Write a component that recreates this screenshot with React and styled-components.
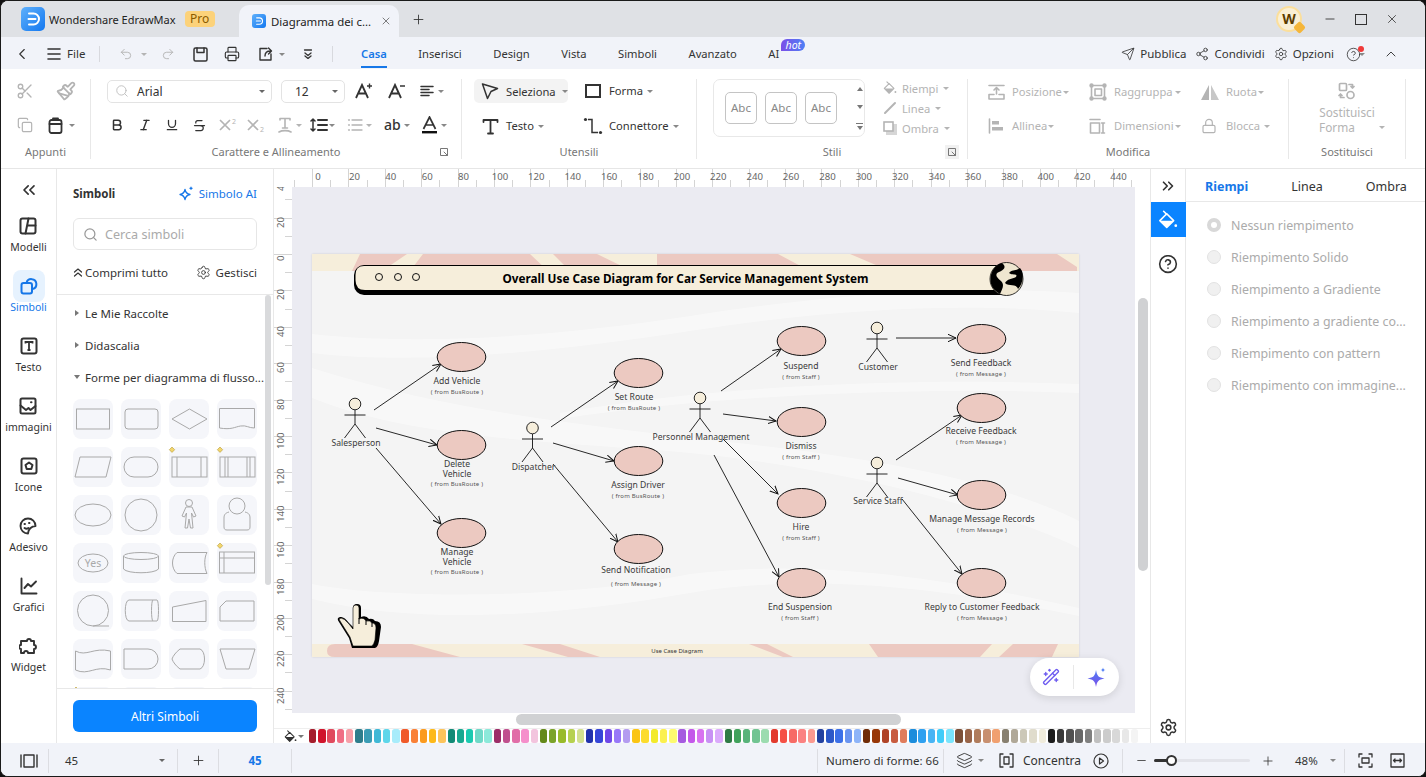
import React from "react";
import styled, { createGlobalStyle } from "styled-components";
import {
  ChevronLeft, Undo2, Redo2, Printer, ChevronUp, Search, Scissors, Paintbrush, Copy,
  Send, Share2, Settings, CircleHelp, Bold, Italic, Underline, Strikethrough, X, Plus, Minus,
  ChevronsLeft, ChevronsRight, Lock, Layers, Wand2,
} from "lucide-react";

const GlobalStyle = createGlobalStyle`
  html, body { margin: 0; padding: 0; background: #111; }
  * { box-sizing: border-box; }
  body { font-family: "Noto Sans", "Liberation Sans", sans-serif; font-size: 11.5px; color: #333; }
`;

const BLUE = "#1677e8";
const OFF = "#b4b4b4";

const Window = styled.div`
  width: 1426px;
  height: 777px;
  border: 1px solid #1a1a1a;
  border-radius: 8px;
  overflow: hidden;
  display: flex;
  flex-direction: column;
  background: #fff;
`;

/* title bar */
const TitleBar = styled.div`
  height: 36px;
  flex: none;
  background: #dfe1e5;
  display: flex;
  align-items: flex-end;
  padding-left: 20px;
`;
const AppName = styled.div`
  height: 36px;
  display: flex;
  align-items: center;
  width: 218px;
  font-size: 11px;
  color: #222;
  gap: 4px;
`;
const ProBadge = styled.span`
  margin-left: 5px;
  width: 30px;
  height: 16px;
  border-radius: 4px;
  background: #fcd27a;
  color: #8a5a00;
  font-size: 12px;
  line-height: 16px;
  text-align: center;
`;
const DocTab = styled.div`
  width: 160px;
  height: 32px;
  background: #f1f3f9;
  border-radius: 10px 10px 0 0;
  display: flex;
  align-items: center;
  padding: 0 7px 0 13px;
  gap: 5px;
  color: #222;
  font-size: 11.4px;
  white-space: nowrap;
`;
const DocTitle = styled.span`
  flex: 1;
`;
const NewTab = styled.div`
  height: 36px;
  display: flex;
  align-items: center;
  margin-left: 12px;
  color: #333;
`;
const WindowButtons = styled.div`
  margin-left: auto;
  height: 36px;
  display: flex;
  align-items: center;
  padding-right: 26px;
  gap: 18px;
  color: #333;
`;
const Avatar = styled.div`
  width: 26px;
  height: 26px;
  margin-right: 3px;
  border-radius: 50%;
  background: #f9efd5;
  border: 2px solid #fbdf9c;
  color: #5c3d00;
  font-weight: 700;
  font-size: 14px;
  line-height: 22px;
  text-align: center;
  position: relative;
`;
const AvatarMark = styled.span`
  position: absolute;
  right: -4px;
  bottom: -2px;
  width: 9px;
  height: 9px;
  background: #f5b63a;
  transform: rotate(45deg);
  border-radius: 2px;
`;
const MaxBox = styled.span`
  width: 12px;
  height: 11px;
  border: 1.3px solid #333;
`;

/* menu bar */
const MenuBar = styled.div`
  height: 32px;
  flex: none;
  background: #f1f3f9;
  display: flex;
  align-items: center;
  padding: 2px 26px 0 0;
  color: #333;
`;
const Tool = styled.div`
  flex: none;
  display: flex;
  align-items: center;
  width: ${(p) => (p.$w ? `${p.$w}px` : "auto")};
  padding-left: ${(p) => p.$pl || 0}px;
  gap: ${(p) => p.$gap || 0}px;
  color: ${(p) => (p.$off ? OFF : "#333")};
  line-height: 16px;
`;
const Sep = styled.div`
  width: 1px;
  height: 16px;
  background: #d8d9de;
  flex: none;
`;
const MenuTabs = styled.div`
  height: 32px;
  margin: -2px 0 0 28px;
  display: flex;
  gap: 31.5px;
  font-size: 11.2px;
`;
const MenuTab = styled.div`
  height: 31px;
  padding-top: 3px;
  display: flex;
  align-items: center;
  position: relative;
  color: ${(p) => (p.$on ? BLUE : "#333")};
  font-weight: ${(p) => (p.$on ? 600 : 400)};
  border-bottom: 2px solid ${(p) => (p.$on ? BLUE : "transparent")};
`;
const HotBadge = styled.span`
  position: absolute;
  left: 13px;
  top: 2px;
  width: 24px;
  height: 12px;
  border-radius: 6px 6px 6px 0;
  background: linear-gradient(90deg, #7b4fe8, #4f7ff5);
  color: #fff;
  font-size: 10.5px;
  line-height: 12px;
  font-style: italic;
  text-align: center;
`;
const MenuRight = styled.div`
  margin-left: auto;
  display: flex;
  align-items: center;
  gap: 9px;
`;
const RedDot = styled.span`
  width: 6px;
  height: 6px;
  border-radius: 50%;
  background: #f03a3a;
  margin: -10px 0 0 -3px;
`;

const Caret = styled.span`
  flex: none;
  width: 0;
  height: 0;
  margin-left: ${(p) => p.$ml ?? 3}px;
  border-left: 3px solid transparent;
  border-right: 3px solid transparent;
  border-top: 3px solid ${(p) => p.$c || "#888"};
`;

/* ribbon */
const Ribbon = styled.div`
  height: 100px;
  flex: none;
  background: #fff;
  border-bottom: 1px solid #e6e6e6;
  display: flex;
  padding-top: 10px;
  font-size: 11.2px;
`;
const Group = styled.div`
  flex: none;
  width: ${(p) => p.$w}px;
  height: 80px;
  border-right: 1px solid #e8e8e8;
  display: flex;
  flex-direction: column;
`;
const GroupBody = styled.div`
  height: 58px;
  flex: none;
  display: flex;
  flex-direction: ${(p) => (p.$row ? "row" : "column")};
  gap: 10px;
`;
const RibbonRow = styled.div`
  height: 24px;
  flex: none;
  display: flex;
  align-items: center;
  padding-left: ${(p) => p.$pl || 0}px;
  margin-top: ${(p) => p.$dy || 0}px;
`;
const GroupFoot = styled.div`
  margin-top: 7px;
  height: 14px;
  display: grid;
  grid-template-columns: 1fr auto 1fr;
  align-items: center;
  font-size: 11px;
  color: #777;
  padding: 0 ${(p) => p.$pr || 0}px;
`;
const FootEnd = styled.span`
  justify-self: end;
  color: #777;
  display: flex;
  padding: 2px;
  background: ${(p) => (p.$tint ? "#f1f1f1" : "transparent")};
`;
const FieldBox = styled.div`
  flex: none;
  width: ${(p) => p.$w}px;
  height: 23px;
  border: 1px solid #e3e3e3;
  border-radius: 5px;
  display: flex;
  align-items: center;
  padding: 0 6px 0 ${(p) => p.$pl}px;
  gap: 8px;
  color: #333;
  font-size: 12px;
  margin-right: ${(p) => p.$mr || 0}px;
`;
const FieldText = styled.span`
  flex: 1;
`;
const SelectTool = styled.div`
  flex: none;
  width: 94px;
  height: 24px;
  border-radius: 5px;
  background: #f3f3f3;
  display: flex;
  align-items: center;
  padding-left: 7px;
  margin-right: 17px;
  color: #333;
`;
const IconSlot = styled.span`
  flex: none;
  width: ${(p) => p.$w || 24}px;
  margin-left: ${(p) => p.$ml || 0}px;
  display: flex;
  align-items: center;
`;
const FormSquare = styled.span`
  display: block;
  width: 16px;
  height: 14px;
  border: 2px solid #333;
`;
const StyleBox = styled.div`
  flex: none;
  width: 152px;
  height: 58px;
  margin-left: 16px;
  border: 1px solid #e8e8e8;
  border-radius: 7px;
  display: flex;
  align-items: center;
  padding-left: 11px;
  gap: 8px;
`;
const AbcCard = styled.div`
  width: 32px;
  height: 32px;
  border: 1px solid #c4c4c4;
  border-radius: 5px;
  color: #888;
  font-size: 11.5px;
  line-height: 30px;
  text-align: center;
`;
const StyleArrows = styled.div`
  height: 56px;
  margin-left: 11px;
  display: flex;
  flex-direction: column;
  justify-content: space-around;
  align-items: center;
  color: #777;
`;
const Triangle = styled.span`
  width: 0;
  height: 0;
  border-left: 3.5px solid transparent;
  border-right: 3.5px solid transparent;
  ${(p) => (p.$up ? "border-bottom: 4px solid #777;" : "border-top: 4px solid #777;")}
`;
const MoreLines = styled.span`
  width: 7px;
  height: 6px;
  border-top: 1px solid #777;
  display: flex;
  justify-content: center;
  padding-top: 2px;
`;
const StyleOptions = styled.div`
  margin: -1px 0 0 8px;
  height: 60px;
  display: flex;
  flex-direction: column;
  justify-content: space-between;
  color: ${OFF};
`;
const StyleOption = styled.div`
  height: 20px;
  display: flex;
  align-items: center;
`;
const SwapBody = styled.div`
  height: 58px;
  flex: none;
  display: flex;
  flex-direction: column;
  align-items: center;
  color: ${OFF};
  font-size: 11.8px;
  line-height: 15px;
  padding-top: 3px;
`;
const SwapLine = styled.div`
  width: 100%;
  display: grid;
  grid-template-columns: 1fr auto 1fr;
  align-items: center;
  padding-right: 20px;
`;
const SwapCaret = styled(Caret)`
  justify-self: end;
`;
const SwapIcon = styled.div`
  height: 20px;
  margin-bottom: 3px;
`;

/* main */
const Main = styled.div`
  flex: 1;
  min-height: 0;
  display: flex;
`;
const Nav = styled.div`
  flex: none;
  width: 56px;
  border-right: 1px solid #e8e8e8;
  display: flex;
  flex-direction: column;
  align-items: center;
  gap: 14px;
`;
const NavCollapse = styled.div`
  height: 41px;
  margin-bottom: -14px;
  display: flex;
  align-items: center;
  color: #333;
`;
const NavItem = styled.div`
  height: 46px;
  display: flex;
  flex-direction: column;
  align-items: center;
  color: ${(p) => (p.$on ? BLUE : "#333")};
  font-size: 10.5px;
  line-height: 14px;
`;
const NavIcon = styled.div`
  width: 32px;
  height: 32px;
  flex: none;
  border-radius: 8px;
  background: ${(p) => (p.$on ? "#e6f2fe" : "transparent")};
  display: flex;
  align-items: center;
  justify-content: center;
  margin-bottom: -2px;
`;

const SymbolPanel = styled.div`
  flex: none;
  width: 217px;
  border-right: 1px solid #e8e8e8;
  display: flex;
  flex-direction: column;
`;
const PanelHead = styled.div`
  height: 49px;
  flex: none;
  padding: 0 16px;
  display: flex;
  align-items: center;
  justify-content: space-between;
`;
const PanelTitle = styled.span`
  font-weight: 700;
  color: #333;
`;
const AiLink = styled.span`
  color: ${BLUE};
  display: flex;
  align-items: center;
  gap: 5px;
`;
const SearchBox = styled.div`
  flex: none;
  width: 184px;
  height: 32px;
  margin-left: 16px;
  border: 1px solid #e6e6e6;
  border-radius: 6px;
  display: flex;
  align-items: center;
  padding-left: 9px;
  gap: 7px;
  color: #aaa;
  font-size: 12.6px;
`;
const ActionRow = styled.div`
  height: 45px;
  flex: none;
  padding: 0 16px;
  border-bottom: 1px solid #e8e8e8;
  display: flex;
  align-items: center;
  justify-content: space-between;
  color: #333;
`;
const Action = styled.span`
  display: flex;
  align-items: center;
  gap: ${(p) => p.$gap || 5}px;
`;
const SymbolBody = styled.div`
  flex: 1;
  min-height: 0;
  display: flex;
`;
const SymbolList = styled.div`
  width: 208px;
  flex: none;
  overflow: hidden;
  padding: 2px 0 0 16px;
`;
const TreeRow = styled.div`
  height: 32px;
  width: 190px;
  display: flex;
  align-items: center;
  gap: 5px;
  color: #333;
  white-space: nowrap;
`;
const TreeMark = styled.span`
  flex: none;
  width: 6px;
  margin-left: 1px;
  display: flex;
  justify-content: center;
`;
const ArrowRight = styled.span`
  border-top: 3.5px solid transparent;
  border-bottom: 3.5px solid transparent;
  border-left: 4px solid #777;
`;
const ArrowDown = styled.span`
  border-left: 3.5px solid transparent;
  border-right: 3.5px solid transparent;
  border-top: 4px solid #777;
`;
const ShapeGrid = styled.div`
  margin-top: 6px;
  display: grid;
  grid-template-columns: repeat(4, 40px);
  grid-auto-rows: 40px;
  gap: 8px;
`;
const ShapeCell = styled.div`
  width: 40px;
  height: 40px;
  border-radius: 8px;
  background: #f5f6fa;
  color: #a9a9a9;
`;
const ScrollTrack = styled.div`
  flex: 1;
`;
const SymbolThumb = styled.div`
  width: 6px;
  height: 290px;
  border-radius: 3px;
  background: #d9dadc;
`;
const PanelFoot = styled.div`
  height: 55px;
  flex: none;
  border-top: 1px solid #e8e8e8;
  padding: 11px 16px 0;
`;
const PrimaryButton = styled.div`
  height: 32px;
  border-radius: 6px;
  background: #0a84ff;
  color: #fff;
  font-size: 12px;
  line-height: 33px;
  text-align: center;
`;

/* canvas */
const CanvasColumn = styled.div`
  flex: none;
  width: 876px;
  display: flex;
  flex-direction: column;
`;
const TopRuler = styled.div`
  height: 18px;
  flex: none;
  display: flex;
  overflow: hidden;
  background: #fff;
`;
const RulerCorner = styled.div`
  flex: none;
  width: 18px;
  height: 18px;
  background: #fff;
  position: relative;
  z-index: 1;
  margin-right: -16.4px;
`;
const TopCell = styled.div`
  flex: none;
  width: 36.4px;
  border-left: 1px solid #d4d4d4;
  font-size: 9.6px;
  line-height: 15px;
  color: #666;
  background: linear-gradient(#d4d4d4, #d4d4d4) no-repeat 17.2px 100% / 1px 7px;
`;
const TopLabel = styled.span`
  width: 10px;
  display: flex;
  justify-content: center;
  white-space: nowrap;
`;
const CanvasMiddle = styled.div`
  flex: 1;
  min-height: 0;
  display: flex;
`;
const LeftRuler = styled.div`
  flex: none;
  width: 18px;
  overflow: hidden;
  background: #fff;
`;
const LeftTrack = styled.div`
  margin-top: -5.8px;
`;
const LeftCell = styled.div`
  height: 36.4px;
  border-top: 1px solid #d4d4d4;
  font-size: 9.6px;
  color: #666;
  background: linear-gradient(#d4d4d4, #d4d4d4) no-repeat 100% 17.2px / 7px 1px;
`;
const LeftLabel = styled.span`
  display: flex;
  writing-mode: vertical-rl;
  transform: rotate(180deg);
  justify-content: center;
  white-space: nowrap;
  width: 13px;
  line-height: 13px;
  height: 7px;
`;
const Scroller = styled.div`
  flex: 1;
  min-width: 0;
  background: #ebebf2;
  padding: 67px 0 0 20px;
  position: relative;
  overflow: hidden;
`;
const DiagramPage = styled.svg`
  display: block;
  width: 767px;
  height: 403px;
  background: #f4f4f4;
  box-shadow: 0 0 2px rgba(0, 0, 0, 0.12);
`;
const CaseName = styled.text`
  font-family: "Noto Sans", sans-serif;
  font-size: 8.6px;
  fill: #3a3a3a;
  text-anchor: middle;
`;
const CaseFrom = styled.text`
  font-family: "Noto Sans", sans-serif;
  font-size: 6px;
  letter-spacing: 0.2px;
  fill: #555;
  text-anchor: middle;
`;
const PageTitle = styled.text`
  font-family: "Noto Sans", sans-serif;
  font-size: 11.75px;
  font-weight: 700;
  fill: #000;
  text-anchor: middle;
`;
const AiPill = styled.div`
  position: absolute;
  right: 16px;
  bottom: 17px;
  width: 89px;
  height: 38px;
  border-radius: 19px;
  background: #fff;
  box-shadow: 0 2px 8px rgba(0, 0, 0, 0.12);
  display: flex;
  align-items: center;
  justify-content: space-around;
  padding: 0 6px 0 5px;
`;
const PillSep = styled.span`
  width: 1px;
  height: 24px;
  background: #e8e8e8;
`;
const VScroll = styled.div`
  flex: none;
  width: 15px;
  background: #fff;
  padding: 111px 0 0 3px;
`;
const VThumb = styled.div`
  width: 10px;
  height: 273px;
  border-radius: 5px;
  background: #d0d1d3;
`;
const HScroll = styled.div`
  flex: none;
  height: 15px;
  background: #fff;
  padding: 1px 0 0 242px;
`;
const HThumb = styled.div`
  width: 385px;
  height: 11px;
  border-radius: 6px;
  background: #d0d1d3;
`;
const ColorRow = styled.div`
  flex: none;
  height: 15px;
  background: #fff;
  border-top: 1px solid #eee;
  display: flex;
  align-items: center;
  padding-left: 10px;
  color: #333;
`;
const FillMark = styled.div`
  width: 25px;
  display: flex;
  align-items: center;
`;
const Swatches = styled.div`
  display: flex;
  gap: 1.85px;
`;
const Swatch = styled.span`
  width: 7.4px;
  height: 14px;
  border-radius: 2.5px;
  background: ${(p) => p.$c};
`;

/* right dock */
const Dock = styled.div`
  flex: none;
  width: 36px;
  border-left: 1px solid #e8e8e8;
  border-right: 1px solid #e8e8e8;
  display: flex;
  flex-direction: column;
  align-items: center;
  color: #333;
`;
const DockTop = styled.div`
  height: 33px;
  display: flex;
  align-items: center;
`;
const DockActive = styled.div`
  width: 35px;
  height: 35px;
  background: #0a84ff;
  color: #fff;
  display: flex;
  align-items: center;
  justify-content: center;
`;
const DockHelp = styled.div`
  margin-top: 17px;
  display: flex;
`;
const DockGear = styled.div`
  margin-top: auto;
  padding-bottom: 6px;
  display: flex;
`;
const FillPanel = styled.div`
  flex: 1;
  display: flex;
  flex-direction: column;
`;
const FillTabs = styled.div`
  height: 33px;
  flex: none;
  border-bottom: 1px solid #e8e8e8;
  display: flex;
  align-items: center;
  gap: 43px;
  padding: 2px 0 0 19px;
  color: #333;
  font-size: 12.5px;
`;
const FillTab = styled.span`
  color: ${(p) => (p.$on ? BLUE : "#333")};
  font-weight: ${(p) => (p.$on ? 700 : 400)};
`;
const FillList = styled.div`
  padding: 7px 0 0 21px;
`;
const FillOption = styled.div`
  height: 32px;
  display: flex;
  align-items: center;
  gap: 10px;
  color: #ababab;
  font-size: 12.4px;
  white-space: nowrap;
`;
const Radio = styled.span`
  flex: none;
  width: 14px;
  height: 14px;
  border-radius: 50%;
  background: #f0f0f0;
  border: ${(p) => (p.$on ? "4px solid #d8d8d8" : "1px solid #e2e2e2")};
  ${(p) => p.$on && "background: #fff;"}
`;

/* status bar */
const StatusBar = styled.div`
  height: 33px;
  flex: none;
  background: #f1f3f9;
  display: flex;
  align-items: center;
  padding-top: 2px;
  color: #333;
`;
const StatusCell = styled.div`
  flex: none;
  width: ${(p) => p.$w}px;
  height: 24px;
  display: flex;
  align-items: center;
  justify-content: ${(p) => p.$align || "flex-start"};
  padding-left: ${(p) => p.$pl || 0}px;
  gap: ${(p) => p.$gap || 0}px;
  border-right: ${(p) => (p.$sep ? "1px solid #dcdde2" : "0")};
  color: ${(p) => p.$color || "#333"};
  font-weight: ${(p) => p.$weight || 400};
  white-space: nowrap;
`;
const StatusGrow = styled.div`
  flex: 1;
  height: 24px;
  border-right: 1px solid #dcdde2;
`;
const PageCaret = styled(Caret)`
  margin-right: 12px;
`;
const FocusLabel = styled.span`
  font-size: 12px;
`;
const ZoomValue = styled.span`
  margin-left: 20px;
`;
const SliderTrack = styled.div`
  width: 96px;
  height: 3px;
  margin: 0 11px 0 6px;
  background: #e3e4ea;
  border-radius: 2px;
  display: flex;
  align-items: center;
`;
const SliderFill = styled.div`
  width: 14px;
  height: 3px;
  background: #333;
  border-radius: 2px;
`;
const SliderKnob = styled.div`
  flex: none;
  width: 11px;
  height: 11px;
  margin-left: -2px;
  border-radius: 50%;
  background: #fff;
  border: 2px solid #333;
`;
const AbGlyph = styled.span`
  font-weight: 500;
  font-size: 14px;
`;

/* small drawn icons */
const Ico = ({ s = 16, sw = 1.5, vb = 24, children, fill = "none" }) => (
  <svg width={s} height={s} viewBox={`0 0 ${vb} ${vb}`} fill={fill} stroke="currentColor" strokeWidth={sw} strokeLinecap="round" strokeLinejoin="round">
    {children}
  </svg>
);
const LogoMark = ({ s = 24 }) => (
  <svg width={s} height={s} viewBox="0 0 24 24">
    <defs>
      <linearGradient id={`lg${s}`} x1="0" y1="0" x2="1" y2="1">
        <stop offset="0" stopColor="#5fb0fb" />
        <stop offset="1" stopColor="#1478f0" />
      </linearGradient>
    </defs>
    <rect width="24" height="24" rx="5" fill={`url(#lg${s})`} />
    <path d="M8 6.5h4.5a5.5 5.5 0 0 1 0 11H8M7.5 12h7" fill="none" stroke="#fff" strokeWidth="2" strokeLinecap="round" />
  </svg>
);
const MenuLines = () => (
  <Ico s={14} sw={1.6} vb={14}><path d="M1 2h12M1 7h12M1 12h12" /></Ico>
);
const SaveIcon = () => (
  <Ico s={15} sw={1.5} vb={15}><rect x="1" y="1" width="13" height="13" rx="1.5" /><path d="M4 1v4.5h7V1" /></Ico>
);
const ShareBox = () => (
  <Ico s={16} sw={1.4} vb={16}><path d="M9 2.5H2v11.5h11V8M7 10c0-3 2-5 5.5-5M10.5 2l3 3-3 3" /></Ico>
);
const Customize = () => (
  <Ico s={10} sw={1.3} vb={10}><path d="M1.5 1h7M2 4l3 2.5L8 4M2 7l3 2.5L8 7" /></Ico>
);
const LauncherIcon = () => (
  <Ico s={10} sw={1} vb={10}><path d="M8.5 5V1.5h-7v7H5M5 5l3.5 3.5M5.5 8.5h3v-3" /></Ico>
);
const BrushIcon = () => <Paintbrush size={20} strokeWidth={2.2} />;
const PasteIcon = () => (
  <Ico s={17} sw={1.8} vb={17}><rect x="2.5" y="3" width="12" height="13" rx="2" /><path d="M6 3V1.5h5V3M2.5 7h12" /></Ico>
);
const APlus = ({ sign }) => (
  <svg width="20" height="18" viewBox="0 0 20 18" fill="none" stroke="#333">
    <path d="M2 16 8 3l6 13M4.5 11.5h7" strokeWidth="1.8" />
    {sign === "+" ? <path d="M13 4h5M15.5 1.5v5" strokeWidth="1.4" /> : <path d="M13 4h5" strokeWidth="1.6" />}
  </svg>
);
const AlignIcon = () => (
  <Ico s={14} sw={1.5} vb={14}><path d="M1 2.5h12M1 5.5h8M1 8.5h12M1 11.5h8" /></Ico>
);
const ScriptIcon = ({ low }) => (
  <svg width="20" height="16" viewBox="0 0 20 16" fill="none" stroke={OFF}>
    <path d="M2 3l10 10M12 3 2 13" strokeWidth="1.7" />
    <text x="14" y={low ? 15 : 7} fontSize="7" fill={OFF} stroke="none" fontFamily="Noto Sans">2</text>
  </svg>
);
const TextTone = () => (
  <Ico s={16} sw={1.6} vb={16}><path d="M3 3V1.5h10V3M8 1.5V11M5.5 11h5M2 15c3-1.8 9-1.8 12 0" /></Ico>
);
const LineSpacing = () => (
  <Ico s={18} sw={1.5} vb={18}><path d="M3 3v12M1 5l2-2 2 2M1 13l2 2 2-2" /><path d="M8 4h9M8 9h9M8 14h9" strokeWidth="2" /></Ico>
);
const ListIcon = () => (
  <Ico s={16} sw={1.3} vb={16}><path d="M5 3h10M5 8h10M5 13h10M1.5 3h1M1.5 8h1M1.5 13h1" /></Ico>
);
const ColorA = () => (
  <svg width="17" height="18" viewBox="0 0 17 18" fill="none" stroke="#333">
    <path d="M2.5 13 8.5 1l6 12M5 9h7" strokeWidth="1.7" />
    <rect x="1" y="15" width="15" height="2.4" fill="#111" stroke="none" />
  </svg>
);
const PointerIcon = () => (
  <Ico s={18} sw={1.5} vb={18}><path d="M1.5 2 16.5 6.5 10 9.5 6.5 16.5Z" /></Ico>
);
const TextTool = () => (
  <Ico s={17} sw={1.8} vb={17}><path d="M1.5 4V2h14v2M8.5 2v13.5M6 15.5h5" /></Ico>
);
const ConnectorIcon = () => (
  <svg width="20" height="20" viewBox="0 0 20 20" fill="none" stroke="#333" strokeWidth="1.5">
    <circle cx="2.5" cy="3.5" r="1.6" fill="#333" stroke="none" />
    <circle cx="17.5" cy="16.5" r="1.6" fill="#333" stroke="none" />
    <path d="M5 3.5h4V16.5h6" />
  </svg>
);
const BucketIcon = ({ s = 16 }) => (
  <svg width={s} height={s} viewBox="0 0 16 16" fill="currentColor" stroke="currentColor" strokeWidth="1.3" strokeLinejoin="round" strokeLinecap="round">
    <path d="M7 3 1.5 8.5 7 14l5.5-5.5Z" fill="none" />
    <path d="M1.5 8.5h11L7 14Z" stroke="none" />
    <path d="M4.5 1 7 3.5" fill="none" />
    <circle cx="14.2" cy="12.5" r="1.1" stroke="none" />
  </svg>
);
const LineIcon = () => (
  <Ico s={14} sw={2} vb={14}><path d="M2 12 12 2" /></Ico>
);
const ShadowIcon = () => (
  <svg width="14" height="14" viewBox="0 0 14 14" fill="none"><rect x="3" y="3" width="11" height="11" fill="#d6d6d6" /><rect x="1" y="1" width="9" height="9" fill="#fff" stroke={OFF} strokeWidth="1.6" /></svg>
);
const PositionIcon = () => (
  <Ico s={17} sw={1.6} vb={17}><path d="M1 1.5h15M8.5 10V4M6 6l2.5-2.5L11 6M1 10.5h5M11 10.5h5M1 10.5V15h15v-4.5" /></Ico>
);
const AlignLeftIcon = () => (
  <Ico s={16} sw={1.6} vb={16}><path d="M1.5 1v14" /><rect x="4" y="3" width="7" height="3.5" fill="currentColor" stroke="none" /><rect x="4" y="9" width="11" height="3.5" fill="currentColor" stroke="none" /></Ico>
);
const GroupIcon = () => (
  <Ico s={18} sw={1.6} vb={18}><rect x="2.5" y="2.5" width="13" height="13" rx="1" /><rect x="6" y="6" width="6.5" height="6.5" /><circle cx="2.5" cy="2.5" r="1.4" fill="currentColor" /><circle cx="15.5" cy="2.5" r="1.4" fill="currentColor" /><circle cx="2.5" cy="15.5" r="1.4" fill="currentColor" /><circle cx="15.5" cy="15.5" r="1.4" fill="currentColor" /></Ico>
);
const SizeIcon = () => (
  <Ico s={17} sw={1.6} vb={17}><path d="M1 1.5h10" /><rect x="1.5" y="5" width="9" height="10" /><path d="M14 5v10M12.5 5h3M12.5 15h3" /></Ico>
);
const FlipIcon = () => (
  <svg width="18" height="17" viewBox="0 0 18 17" fill="currentColor"><path d="M8 1v15H0Z" /><path d="M10 1v15h8Z" opacity=".75" /></svg>
);
const SwapIconGlyph = () => (
  <Ico s={18} sw={1.7} vb={18}><rect x="1.5" y="1.5" width="7" height="7" rx="1" /><circle cx="12.5" cy="13" r="3.5" /><path d="M11 2.5h3.5V6M16 4.5 14.5 6 13 4.5M6 15.5H2.5V12M1 13.5 2.5 12 4 13.5" /></Ico>
);
const SparkleBlue = () => (
  <svg width="16" height="16" viewBox="0 0 16 16" fill="none" stroke={BLUE} strokeWidth="1.3" strokeLinejoin="round">
    <path d="M7 3.5c.6 3 2 4.4 5 5-3 .6-4.4 2-5 5-.6-3-2-4.4-5-5 3-.6 4.4-2 5-5Z" />
    <path d="M13 .8v3M11.5 2.3h3" />
  </svg>
);
const StarBurst = () => (
  <svg width="20" height="20" viewBox="0 0 20 20">
    <defs>
      <linearGradient id="burst" x1="0" y1="0" x2="0" y2="1">
        <stop offset="0" stopColor="#4d7df5" />
        <stop offset="1" stopColor="#7b4fe8" />
      </linearGradient>
    </defs>
    <path d="M9 3C10 9 11.5 10.5 17.5 11.5 11.5 12.5 10 14 9 20 8 14 6.5 12.5.5 11.5 6.5 10.5 8 9 9 3Z" fill="url(#burst)" />
    <path d="M16 .5c.3 1.7.8 2.2 2.5 2.5-1.7.3-2.2.8-2.5 2.5-.3-1.7-.8-2.2-2.5-2.5 1.7-.3 2.2-.8 2.5-2.5Z" fill="#4d7df5" />
  </svg>
);
const CollapseUp = () => (
  <Ico s={10} sw={1.2} vb={10}><path d="M1.5 5 5 2l3.5 3M1.5 9 5 6l3.5 3" /></Ico>
);
const NavModels = () => (
  <Ico s={18} sw={2} vb={18}><rect x="1.5" y="1.5" width="15" height="15" rx="2" /><path d="M9.5 1.5 6.5 16.5M8.3 8.5h8.2" /></Ico>
);
const NavSymbols = () => (
  <Ico s={18} sw={2} vb={18}><rect x="1.5" y="6" width="10.5" height="10.5" rx="2" /><path d="M6.5 6a5 5 0 1 1 6 6" /></Ico>
);
const NavText = () => (
  <svg width="18" height="18" viewBox="0 0 18 18" fill="none" stroke="#333"><rect x="1.5" y="1.5" width="15" height="15" rx="2" strokeWidth="2" /><path d="M5.5 6.5V5h7v1.5M9 5v8M7.5 13h3" strokeWidth="1.8" /></svg>
);
const NavImage = () => (
  <Ico s={18} sw={2} vb={18}><rect x="1.5" y="1.5" width="15" height="15" rx="1.5" /><path d="M1.5 8.5 7 13l2.5-2 2 2 5-4M12 5.2h.5" /></Ico>
);
const NavIconsGlyph = () => (
  <Ico s={18} sw={2} vb={18}><rect x="1.5" y="1.5" width="15" height="15" rx="2" /><path d="M9 5.5 12.5 8l-1.2 4H6.7L5.5 8Z" /></Ico>
);
const NavSticker = () => (
  <Ico s={18} sw={1.9} vb={18}><path d="M16.5 9a7.5 7.5 0 1 0-7.5 7.5c0-4 3.5-7.5 7.5-7.5Z" /><path d="M5.5 7h.5M10 6h.5M5.5 11c1.5 1 2.5 1 4 0" /></Ico>
);
const NavChart = () => (
  <Ico s={18} sw={1.9} vb={18}><path d="M1.5 1.5v15h15M4.5 11l3.5-4 3 2.5 5-5" /></Ico>
);
const NavWidget = () => (
  <Ico s={18} sw={1.9} vb={18}><path d="M5 4h3a2 2 0 1 1 4 0h3v4a2 2 0 1 1 0 4v4H9a2 2 0 1 0-4 0H2v-4a2 2 0 1 1 0-4V4Z" /></Ico>
);
const PagesIcon = () => (
  <Ico s={18} sw={1.4} vb={18}><path d="M1 3v12M17 3v12" /><rect x="4" y="3" width="10" height="12" /></Ico>
);
const FocusIcon = () => (
  <Ico s={15} sw={1.3} vb={15}><path d="M4 1H1v13h3M11 1h3v13h-3" /><rect x="5" y="4" width="5" height="7" /></Ico>
);
const PlayRing = () => (
  <Ico s={16} sw={1.2} vb={16}><circle cx="8" cy="8" r="7" /><path d="M6.5 5 10.5 8l-4 3Z" /></Ico>
);
const FitIcon = () => (
  <Ico s={15} sw={1.3} vb={15}><path d="M4 1H1v3M11 1h3v3M4 14H1v-3M11 14h3v-3" /><rect x="4" y="5" width="7" height="5" /></Ico>
);
const WidthIcon = () => (
  <Ico s={15} sw={1.3} vb={15}><rect x="1" y="1" width="13" height="13" /><path d="M3.5 7.5h8M5 6 3.5 7.5 5 9M10 6l1.5 1.5L10 9" /></Ico>
);

/* one drawing per cell of the shape palette */
const ShapeSvg = styled.svg.attrs({ width: 40, height: 40, viewBox: "0 0 40 40", fill: "none", stroke: "currentColor", strokeWidth: 1 })`
  overflow: visible;
`;
const Dia = () => <path d="M3 0 5.7 2.7 3 5.4.3 2.7Z" fill="#f3d66d" stroke="#b39a3a" strokeWidth=".6" />;
const SHAPES = [
  <rect x="3.5" y="10" width="33" height="20" />,
  <rect x="4" y="10" width="33" height="20" rx="3" />,
  <path d="M3 20 20.5 10 38 20 20.5 30Z" />,
  <path d="M2.5 9.5h35V29c-6 0-8-3-14-2s-9 4-21 2Z" />,
  <path d="M7 10h31l-5 20H2Z" />,
  <rect x="3" y="10" width="34" height="20" rx="10" />,
  <><Dia /><rect x="3" y="10" width="35" height="20" /><path d="M8 10v20M32 10v20" /></>,
  <><Dia /><rect x="3" y="10" width="35" height="20" /><path d="M8 10v20M11 10v20M30 10v20M33 10v20" /></>,
  <ellipse cx="20" cy="20" rx="18" ry="11" />,
  <circle cx="20" cy="20" r="16" />,
  <><circle cx="20" cy="8" r="3.5" /><path d="M17 12h6l4 9-2.5 1-2-4 1.5 15h-2.5L20 24l-1.5 9H16l1.5-15-2 4-2.5-1Z" /></>,
  <><circle cx="20" cy="11" r="8" /><path d="M12 17c-4 1-5 3-5 6v9c0 2 1 3 3 3h20c2 0 3-1 3-3v-9c0-3-1-5-5-6" /></>,
  <><ellipse cx="20" cy="20" rx="15" ry="9" /><text x="20" y="24" fontSize="10.5" textAnchor="middle" fill="#a9a9a9" stroke="none" fontFamily="Noto Sans">Yes</text></>,
  <><ellipse cx="20" cy="13" rx="17.5" ry="3.5" /><path d="M2.5 13v13c4 5 31 5 35 0V13" /></>,
  <path d="M8 9.5h30c-3 5-3 15 0 21H8c-6-5-6-16 0-21Z" />,
  <><Dia /><rect x="2.5" y="9" width="35" height="21" /><path d="M2.5 15h35M7 9v21" /></>,
  <><circle cx="20" cy="19.5" r="15.5" /><path d="M20 35h16" /></>,
  <><path d="M8 9h28c2 0 2 21 0 21H8c-5 0-5-21 0-21Z" /><path d="M32 9c-2 0-2 21 0 21" /></>,
  <path d="M3.5 16 37 9.5v21H3.5Z" />,
  <path d="M9 10h28v20H3V16Z" />,
  <path d="M2.5 12c11 6 18-4 35 0v19c-15-5-22 6-35 0Z" />,
  <path d="M3 10h24a10 10 0 0 1 0 20H3Z" />,
  <path d="M11 10h20c6 2 6 18 0 20H11C7 27 4 23 3 20c1-3 4-7 8-10Z" />,
  <path d="M3 10h35l-6 20H9Z" />,
  <><Dia /><rect x="3" y="10" width="34" height="20" /></>,
  <rect x="3" y="10" width="34" height="20" />,
  <rect x="3" y="10" width="34" height="20" />,
  <rect x="3" y="10" width="34" height="20" />,
];

/* the diagram on the page, in screen coordinates */
const CASES = [
  { x: 461.5, tx: 457, y: 356, name: ["Add Vehicle"], ny: 381, from: "( from BusRoute )", fy: 391 },
  { x: 461.5, tx: 457, y: 444, name: ["Delete", "Vehicle"], ny: 464, from: "( from BusRoute )", fy: 483 },
  { x: 461.5, tx: 457, y: 532, name: ["Manage", "Vehicle"], ny: 552, from: "( from BusRoute )", fy: 571 },
  { x: 638.5, tx: 634, y: 372, name: ["Set Route"], ny: 397, from: "( from BusRoute )", fy: 407 },
  { x: 638.5, tx: 638, y: 460, name: ["Assign Driver"], ny: 485, from: "( from BusRoute )", fy: 495 },
  { x: 638.5, tx: 636, y: 548, name: ["Send Notification"], ny: 570, from: "( from Message )", fy: 583 },
  { x: 801.5, tx: 801, y: 340, name: ["Suspend"], ny: 366, from: "( from Staff )", fy: 376 },
  { x: 801.5, tx: 801, y: 421, name: ["Dismiss"], ny: 446, from: "( from Staff )", fy: 456 },
  { x: 801.5, tx: 801, y: 502, name: ["Hire"], ny: 527, from: "( from Staff )", fy: 537 },
  { x: 801.5, tx: 800, y: 582, name: ["End Suspension"], ny: 607, from: "( from Staff )", fy: 617 },
  { x: 981.5, tx: 981, y: 338, name: ["Send Feedback"], ny: 363, from: "( from Message )", fy: 373 },
  { x: 981.5, tx: 981, y: 407, name: ["Receive Feedback"], ny: 431, from: "( from Message )", fy: 441 },
  { x: 981.5, tx: 982, y: 494, name: ["Manage Message Records"], ny: 519, from: "( from Message )", fy: 529 },
  { x: 981.5, tx: 982, y: 582, name: ["Reply to Customer Feedback"], ny: 607, from: "( from Message )", fy: 617 },
];
const ACTORS = [
  { x: 355, y: 403, name: "Salesperson", ly: 445 },
  { x: 532.5, y: 427, name: "Dispatcher", ly: 469 },
  { x: 700, y: 397, name: "Personnel Management", ly: 439 },
  { x: 877, y: 327, name: "Customer", ly: 369 },
  { x: 877, y: 462, name: "Service Staff", ly: 503 },
];
const ARROWS = [
  [374, 409, 441, 363], [376, 427, 437, 444], [376, 447, 441, 523],
  [551, 426, 618, 380], [553, 442, 614, 460], [553, 463, 618, 541],
  [721, 390, 781, 348], [723, 413, 776, 420], [723, 438, 778, 493], [714, 454, 779, 576],
  [896, 337, 956, 337], [896, 459, 962, 414], [898, 477, 958, 494], [902, 498, 962, 573],
];

const Diagram = () => (
  <DiagramPage viewBox="312 253 767 403">
    <defs>
      <marker id="open" markerWidth="9" markerHeight="9" refX="8" refY="4.5" orient="auto" markerUnits="userSpaceOnUse">
        <path d="M0 .8 8 4.5 0 8.2" fill="none" stroke="#111" strokeWidth="1" />
      </marker>
    </defs>
    {/* soft white bands behind the diagram */}
    <g fill="#fff" opacity=".42">
      <path d="M312 333C420 345 560 335 690 315 850 290 980 285 1079 292V312C980 302 850 305 690 330 560 350 420 365 312 352Z" />
      <path d="M312 367C450 410 560 420 690 437 820 450 980 470 1079 520V547C980 500 820 465 690 452 560 440 420 440 312 397Z" />
      <path d="M560 412C700 386 900 376 1079 383V392C900 385 700 396 560 418Z" />
      <path d="M312 583C380 597 560 600 690 573 830 555 980 585 1079 607V615C980 595 830 568 690 592 560 615 420 625 312 598Z" />
    </g>
    {/* top and bottom strips */}
    <rect x="312" y="253" width="767" height="17" fill="#f6eedb" />
    <path d="M352 270 360 253H407L382 270ZM423 253H530L548 270H410ZM553 253H597L632 270H570ZM657 253H778L810 270H657ZM850 253H1057L1077 266V270H890Z" fill="#ecc9c1" />
    <rect x="312" y="643" width="767" height="13" fill="#f6eedb" />
    <path d="M327 650Q327 643 335 643H412L460 656H335Q327 656 327 650ZM522 643H560L600 656H568ZM749 643H767L793 656H783ZM869 643H992L980 656H878ZM1013 643H1058L1052 656H999Z" fill="#ecc9c1" />
    <text x="677" y="651.5" fontSize="6" fontFamily="Noto Sans" fill="#333" textAnchor="middle">Use Case Diagram</text>
    {/* title capsule */}
    <rect x="354" y="264" width="660" height="30" rx="10" fill="#000" />
    <path d="M364 265H1005V289H365Q355.5 289 355.5 279V274Q355.5 265 364 265Z" fill="#f6eedb" />
    {[379, 398, 416].map((x) => (
      <circle key={x} cx={x} cy="276" r="3.5" fill="#f6eedb" stroke="#111" strokeWidth="1" />
    ))}
    <PageTitle x="685.5" y="282">Overall Use Case Diagram for Car Service Management System</PageTitle>
    {/* globe */}
    <circle cx="1006.5" cy="278" r="16.5" fill="#efe6d0" stroke="#000" strokeWidth=".8" />
    <path d="M1002 262C994 264 990 272 990.5 280 991 286 995 290 1000 293 1002 288 1005 284 1001 280 997 277 994 273 999 271 1004 269 1007 266 1002 262Z" fill="#000" />
    <path d="M1020 267C1016 270 1012 268 1009 272 1013 275 1018 272 1016 276 1012 278 1007 278 1005 282 1009 286 1016 282 1018 288 1022 284 1024 276 1022 270Z" fill="#000" />
    {/* hand pointer */}
    <path d="M353 607Q353 603 357 603 361 603 361 607V616Q366 614 369 618 373 617 375 620 381 620 381 626L379 640Q378 646 375 647H352L349 637 339 621Q336 617 340 616 344 615 349 622L353 626Z" fill="#000" />
    <path d="M353 607Q353 604 356 604 359 604 359 607V618Q364 616 366 620 370 619 372 622 376 622 376 627L375 639Q374 643 372 645H353L350 636 340 620Q338 618 341 617 344 617 349 623L353 628Z" fill="#f6eedb" stroke="#000" strokeWidth=".6" />
    <path d="M359 617V623M366 620V624M372 622V626" stroke="#000" strokeWidth="1" />
    {ARROWS.map(([a, b, c, d]) => (
      <line key={`${a}${b}`} x1={a} y1={b} x2={c} y2={d} stroke="#111" strokeWidth=".9" markerEnd="url(#open)" />
    ))}
    {CASES.map((c) => (
      <g key={c.name.join()}>
        <ellipse cx={c.x} cy={c.y} rx="24.3" ry="14.5" fill="#ecc9c1" stroke="#111" strokeWidth="1" />
        {c.name.map((line, i) => (
          <CaseName key={line} x={c.tx} y={c.ny + 2 + i * 10}>{line}</CaseName>
        ))}
        <CaseFrom x={c.tx} y={c.fy + 2}>{c.from}</CaseFrom>
      </g>
    ))}
    {ACTORS.map((a) => (
      <g key={a.name} fill="none" stroke="#111" strokeWidth=".9">
        <circle cx={a.x} cy={a.y} r="5.8" fill="#f6eedb" />
        <path d={`M${a.x} ${a.y + 6}V${a.y + 20}M${a.x - 10.5} ${a.y + 11}H${a.x + 10.5}M${a.x - 10.5} ${a.y + 34}L${a.x} ${a.y + 20}L${a.x + 10.5} ${a.y + 34}`} />
        <CaseName x={a.x + 1} y={a.ly} stroke="none">{a.name}</CaseName>
      </g>
    ))}
  </DiagramPage>
);

const SWATCHES = [
  "#a51c2c", "#d0142c", "#e04a5e", "#f06e85", "#f79ea8", "#2e7d8c", "#3a9cb5", "#40b8d6", "#5ed6ea", "#a8ecfb",
  "#f05a2a", "#f98038", "#fb9a1e", "#fdb91a", "#fcc45c", "#118a76", "#18a890", "#1bc9b0", "#6fd9c8", "#8ce9da",
  "#9c2d68", "#c0508e", "#e16ea8", "#f58fcb", "#f3c4de", "#64891a", "#7ba32a", "#99bb2b", "#b6d150", "#d2e08f",
  "#2232ad", "#3646d8", "#7048e8", "#9878f8", "#b49cf0", "#fbc513", "#fcdc2e", "#f3ea2c", "#fbf04e", "#fdfb70",
  "#a65ae0", "#c458ea", "#d872f0", "#c890f4", "#dbaafc", "#2f7a46", "#41a25c", "#58b37a", "#71c492", "#9cdcb0",
  "#e23a2e", "#f55045", "#f76b66", "#fb8282", "#fb9a90", "#2342a0", "#2c58c8", "#3c70e8", "#6a94f0", "#8eb4f8",
  "#702c08", "#983808", "#b04428", "#c85c40", "#e07c5c", "#1a8cdc", "#2ea0f0", "#48b4f4", "#40ccf8", "#78e4fc",
  "#7c5038", "#986448", "#b07c5c", "#c89070", "#f0a070", "#888070", "#b0a898", "#ccc8b8", "#e0dccc", "#f0ecdc",
  "#1c1c1c", "#383838", "#505050", "#686868", "#808080", "#c0c0c0", "#cccccc", "#d8d8d8", "#e8e8e8", "#f4f4f4", "#ffffff",
];
const TOP_LABELS = ["", ...Array.from({ length: 23 }, (_, i) => i * 20)];
const LEFT_LABELS = [40, 20, ...Array.from({ length: 13 }, (_, i) => i * 20)];
const NAV = [
  ["Modelli", NavModels], ["Simboli", NavSymbols], ["Testo", NavText], ["immagini", NavImage],
  ["Icone", NavIconsGlyph], ["Adesivo", NavSticker], ["Grafici", NavChart], ["Widget", NavWidget],
];
const FILL_OPTIONS = [
  "Nessun riempimento", "Riempimento Solido", "Riempimento a Gradiente",
  "Riempimento a gradiente co...", "Riempimento con pattern", "Riempimento con immagine...",
];

export default function App() {
  return (
    <>
      <GlobalStyle />
      <Window>
        <TitleBar>
          <AppName>
            <LogoMark />
            Wondershare EdrawMax
            <ProBadge>Pro</ProBadge>
          </AppName>
          <DocTab>
            <LogoMark s={14} />
            <DocTitle>Diagramma dei c...</DocTitle>
            <X size={12} strokeWidth={1.5} color="#555" />
          </DocTab>
          <NewTab><Plus size={15} strokeWidth={1.4} /></NewTab>
          <WindowButtons>
            <Avatar>W<AvatarMark /></Avatar>
            <Minus size={14} strokeWidth={1.5} />
            <MaxBox />
            <X size={14} strokeWidth={1.4} />
          </WindowButtons>
        </TitleBar>

        <MenuBar>
          <Tool $w={38} $pl={12}><ChevronLeft size={18} strokeWidth={1.5} /></Tool>
          <Tool $w={60} $pl={8} $gap={6}><MenuLines />File</Tool>
          <Sep />
          <Tool $w={57} $pl={19} $off><Undo2 size={14} strokeWidth={1.6} /><Caret $ml={8} $c={OFF} /></Tool>
          <Tool $w={30} $pl={4} $off><Redo2 size={14} strokeWidth={1.6} /></Tool>
          <Tool $w={28} $pl={6}><SaveIcon /></Tool>
          <Tool $w={35} $pl={9}><Printer size={16} strokeWidth={1.7} /></Tool>
          <Tool $w={48} $pl={8}><ShareBox /><Caret $ml={5} /></Tool>
          <Tool $w={34} $pl={5}><Customize /></Tool>
          <Sep />
          <MenuTabs>
            <MenuTab $on>Casa</MenuTab>
            <MenuTab>Inserisci</MenuTab>
            <MenuTab>Design</MenuTab>
            <MenuTab>Vista</MenuTab>
            <MenuTab>Simboli</MenuTab>
            <MenuTab>Avanzato</MenuTab>
            <MenuTab>AI<HotBadge>hot</HotBadge></MenuTab>
          </MenuTabs>
          <MenuRight>
            <Tool $gap={5}><Send size={14} strokeWidth={1.4} />Pubblica</Tool>
            <Tool $gap={5}><Share2 size={14} strokeWidth={1.4} />Condividi</Tool>
            <Tool $gap={5}><Settings size={14} strokeWidth={1.4} />Opzioni</Tool>
            <Tool $w={31} $pl={3}><CircleHelp size={15} strokeWidth={1.3} /><RedDot /><Caret $ml={-5} /></Tool>
            <ChevronUp size={16} strokeWidth={1.4} />
          </MenuRight>
        </MenuBar>

        <Ribbon>
          <Group $w={90}>
            <GroupBody>
              <RibbonRow $pl={15}>
                <Tool $w={40} $off><Scissors size={18} strokeWidth={1.8} /></Tool>
                <Tool $off><BrushIcon /></Tool>
              </RibbonRow>
              <RibbonRow $pl={16}>
                <Tool $w={30} $off><Copy size={16} strokeWidth={1.8} /></Tool>
                <Tool><PasteIcon /><Caret $ml={5} /></Tool>
              </RibbonRow>
            </GroupBody>
            <GroupFoot><span /><span>Appunti</span></GroupFoot>
          </Group>

          <Group $w={371}>
            <GroupBody>
              <RibbonRow $pl={16}>
                <FieldBox $w={165} $pl={7} $mr={9}>
                  <Search size={14} color="#bbb" strokeWidth={1.5} />
                  <FieldText>Arial</FieldText>
                  <Caret $c="#666" />
                </FieldBox>
                <FieldBox $w={64} $pl={13}>
                  <FieldText>12</FieldText>
                  <Caret $c="#666" />
                </FieldBox>
                <Tool $w={35} $pl={9}><APlus sign="+" /></Tool>
                <Tool $w={32} $pl={7}><APlus sign="-" /></Tool>
                <Tool $pl={8}><AlignIcon /><Caret $ml={4} /></Tool>
              </RibbonRow>
              <RibbonRow $pl={11}>
                <Tool $w={28} $pl={8}><Bold size={14} strokeWidth={2.6} /></Tool>
                <Tool $w={28} $pl={8}><Italic size={14} strokeWidth={2.4} /></Tool>
                <Tool $w={28} $pl={7}><Underline size={14} strokeWidth={2.2} /></Tool>
                <Tool $w={28} $pl={6}><Strikethrough size={15} strokeWidth={2} /></Tool>
                <Tool $w={28} $pl={4}><ScriptIcon /></Tool>
                <Tool $w={28} $pl={4}><ScriptIcon low /></Tool>
                <Tool $w={40} $pl={7} $off><TextTone /><Caret $c={OFF} /></Tool>
                <Tool $w={34} $pl={0}><LineSpacing /><Caret $ml={1} /></Tool>
                <Tool $w={40} $pl={3} $off><ListIcon /><Caret $c={OFF} /></Tool>
                <Tool $w={37} $pl={0}><AbGlyph>ab</AbGlyph><Caret /></Tool>
                <Tool $pl={0}><ColorA /><Caret /></Tool>
              </RibbonRow>
            </GroupBody>
            <GroupFoot $pr={10}>
              <span />
              <span>Carattere e Allineamento</span>
              <FootEnd><LauncherIcon /></FootEnd>
            </GroupFoot>
          </Group>

          <Group $w={235}>
            <GroupBody>
              <RibbonRow $pl={12}>
                <SelectTool>
                  <IconSlot $w={25}><PointerIcon /></IconSlot>
                  Seleziona<Caret $ml={6} />
                </SelectTool>
                <Tool><IconSlot><FormSquare /></IconSlot>Forma<Caret $ml={4} /></Tool>
              </RibbonRow>
              <RibbonRow $pl={20} $dy={1}>
                <Tool $w={101}><IconSlot><TextTool /></IconSlot>Testo<Caret $ml={4} /></Tool>
                <Tool><IconSlot $w={26}><ConnectorIcon /></IconSlot>Connettore<Caret $ml={4} /></Tool>
              </RibbonRow>
            </GroupBody>
            <GroupFoot><span /><span>Utensili</span></GroupFoot>
          </Group>

          <Group $w={271}>
            <GroupBody $row>
              <StyleBox>
                <AbcCard>Abc</AbcCard>
                <AbcCard>Abc</AbcCard>
                <AbcCard>Abc</AbcCard>
                <StyleArrows>
                  <Triangle $up />
                  <Triangle />
                  <MoreLines><Triangle /></MoreLines>
                </StyleArrows>
              </StyleBox>
              <StyleOptions>
                <StyleOption><IconSlot $w={19}><BucketIcon s={14} /></IconSlot>Riempi<Caret $ml={5} $c={OFF} /></StyleOption>
                <StyleOption><IconSlot $w={19}><LineIcon /></IconSlot>Linea<Caret $ml={5} $c={OFF} /></StyleOption>
                <StyleOption><IconSlot $w={19}><ShadowIcon /></IconSlot>Ombra<Caret $ml={5} $c={OFF} /></StyleOption>
              </StyleOptions>
            </GroupBody>
            <GroupFoot $pr={8}>
              <span />
              <span>Stili</span>
              <FootEnd $tint><LauncherIcon /></FootEnd>
            </GroupFoot>
          </Group>

          <Group $w={321}>
            <GroupBody>
              <RibbonRow $pl={20} $dy={1}>
                <Tool $w={101} $off><IconSlot><PositionIcon /></IconSlot>Posizione<Caret $ml={1} $c={OFF} /></Tool>
                <Tool $w={112} $off><IconSlot $w={25}><GroupIcon /></IconSlot>Raggruppa<Caret $ml={2} $c={OFF} /></Tool>
                <Tool $off><IconSlot $w={25}><FlipIcon /></IconSlot>Ruota<Caret $ml={1} $c={OFF} /></Tool>
              </RibbonRow>
              <RibbonRow $pl={20}>
                <Tool $w={101} $off><IconSlot><AlignLeftIcon /></IconSlot>Allinea<Caret $ml={1} $c={OFF} /></Tool>
                <Tool $w={112} $off><IconSlot $w={25}><SizeIcon /></IconSlot>Dimensioni<Caret $ml={1} $c={OFF} /></Tool>
                <Tool $off><IconSlot $w={25}><Lock size={16} strokeWidth={1.8} /></IconSlot>Blocca<Caret $ml={4} $c={OFF} /></Tool>
              </RibbonRow>
            </GroupBody>
            <GroupFoot><span /><span>Modifica</span></GroupFoot>
          </Group>

          <Group $w={117}>
            <SwapBody>
              <SwapIcon><SwapIconGlyph /></SwapIcon>
              Sostituisci
              <SwapLine>
                <span />
                <span>Forma</span>
                <SwapCaret $c={OFF} />
              </SwapLine>
            </SwapBody>
            <GroupFoot><span /><span>Sostituisci</span></GroupFoot>
          </Group>
        </Ribbon>

        <Main>
          <Nav>
            <NavCollapse><ChevronsLeft size={20} strokeWidth={2} /></NavCollapse>
            {NAV.map(([label, Glyph]) => (
              <NavItem key={label} $on={label === "Simboli"}>
                <NavIcon $on={label === "Simboli"}><Glyph /></NavIcon>
                {label}
              </NavItem>
            ))}
          </Nav>

          <SymbolPanel>
            <PanelHead>
              <PanelTitle>Simboli</PanelTitle>
              <AiLink><SparkleBlue />Simbolo AI</AiLink>
            </PanelHead>
            <SearchBox>
              <Search size={15} strokeWidth={2} color="#999" />
              Cerca simboli
            </SearchBox>
            <ActionRow>
              <Action $gap={2}><CollapseUp />Comprimi tutto</Action>
              <Action><Settings size={15} strokeWidth={1.4} />Gestisci</Action>
            </ActionRow>
            <SymbolBody>
              <SymbolList>
                <TreeRow><TreeMark><ArrowRight /></TreeMark>Le Mie Raccolte</TreeRow>
                <TreeRow><TreeMark><ArrowRight /></TreeMark>Didascalia</TreeRow>
                <TreeRow><TreeMark><ArrowDown /></TreeMark>Forme per diagramma di flusso...</TreeRow>
                <ShapeGrid>
                  {SHAPES.map((shape, i) => (
                    <ShapeCell key={i}><ShapeSvg>{shape}</ShapeSvg></ShapeCell>
                  ))}
                </ShapeGrid>
              </SymbolList>
              <ScrollTrack><SymbolThumb /></ScrollTrack>
            </SymbolBody>
            <PanelFoot><PrimaryButton>Altri Simboli</PrimaryButton></PanelFoot>
          </SymbolPanel>

          <CanvasColumn>
            <TopRuler>
              <RulerCorner />
              {TOP_LABELS.map((n, i) => <TopCell key={i}><TopLabel>{n}</TopLabel></TopCell>)}
            </TopRuler>
            <CanvasMiddle>
              <LeftRuler>
                <LeftTrack>
                  {LEFT_LABELS.map((n, i) => <LeftCell key={i}><LeftLabel>{n}</LeftLabel></LeftCell>)}
                </LeftTrack>
              </LeftRuler>
              <Scroller>
                <Diagram />
                <AiPill>
                  <Wand2 size={18} color="#6d5bf0" strokeWidth={1.8} />
                  <PillSep />
                  <StarBurst />
                </AiPill>
              </Scroller>
              <VScroll><VThumb /></VScroll>
            </CanvasMiddle>
            <HScroll><HThumb /></HScroll>
            <ColorRow>
              <FillMark><BucketIcon s={13} /><Caret $ml={1} $c="#777" /></FillMark>
              <Swatches>
                {SWATCHES.map((c, i) => <Swatch key={i} $c={c} />)}
              </Swatches>
            </ColorRow>
          </CanvasColumn>

          <Dock>
            <DockTop><ChevronsRight size={18} strokeWidth={2.2} /></DockTop>
            <DockActive><BucketIcon s={20} /></DockActive>
            <DockHelp><CircleHelp size={20} strokeWidth={1.9} /></DockHelp>
            <DockGear><Settings size={19} strokeWidth={1.9} /></DockGear>
          </Dock>

          <FillPanel>
            <FillTabs>
              <FillTab $on>Riempi</FillTab>
              <FillTab>Linea</FillTab>
              <FillTab>Ombra</FillTab>
            </FillTabs>
            <FillList>
              {FILL_OPTIONS.map((label, i) => (
                <FillOption key={label}><Radio $on={i === 0} />{label}</FillOption>
              ))}
            </FillList>
          </FillPanel>
        </Main>

        <StatusBar>
          <StatusCell $w={48} $pl={19} $sep><PagesIcon /></StatusCell>
          <StatusCell $w={129} $pl={16} $sep>
            <FieldText>45</FieldText>
            <PageCaret $c="#666" />
          </StatusCell>
          <StatusCell $w={41} $align="center" $sep><Plus size={15} strokeWidth={1.4} /></StatusCell>
          <StatusCell $w={73} $align="center" $sep $color={BLUE} $weight={700}>45</StatusCell>
          <StatusGrow />
          <StatusCell $w={126} $pl={8} $sep>Numero di forme: 66</StatusCell>
          <StatusCell $w={179} $pl={12} $sep>
            <Layers size={17} strokeWidth={1.3} />
            <Caret $ml={5} />
            <IconSlot $w={24} $ml={15}><FocusIcon /></IconSlot>
            <FocusLabel>Concentra</FocusLabel>
            <IconSlot $w={16} $ml={12}><PlayRing /></IconSlot>
          </StatusCell>
          <StatusCell $w={222} $pl={12} $sep>
            <Minus size={13} strokeWidth={1.5} />
            <SliderTrack>
              <SliderFill />
              <SliderKnob />
            </SliderTrack>
            <Plus size={14} strokeWidth={1.4} />
            <ZoomValue>48%</ZoomValue>
            <Caret $ml={12} />
          </StatusCell>
          <StatusCell $w={80} $pl={13} $gap={17}>
            <FitIcon />
            <WidthIcon />
          </StatusCell>
        </StatusBar>
      </Window>
    </>
  );
}
